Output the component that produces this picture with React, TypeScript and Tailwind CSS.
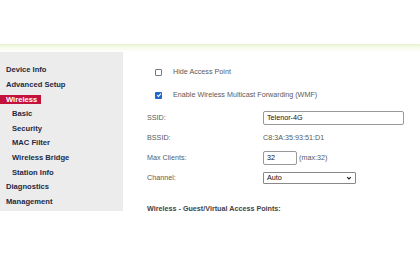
export default function App() {
  const sub = ['Basic', 'Security', 'MAC Filter', 'Wireless Bridge', 'Station Info'];

  return (
    <div className="w-[420px] h-[280px] bg-white overflow-hidden font-['Liberation_Sans',Arial,sans-serif]">
      <div className="h-[44px]" />
      <div className="h-[8px] bg-gradient-to-b from-[#e9f1d2] via-[#f7fbee] to-white" />
      <div className="flex">
        <div className="w-[123px] h-[159px] bg-[#ececec] pt-[11px] text-[7.6px] font-bold text-[#1e2a44] leading-[14.6px]">
          <div className="pl-[6px]">Device Info</div>
          <div className="pl-[6px]">Advanced Setup</div>
          <div className="flex">
            <span className="bg-[#c3123b] text-white pl-[6px] pr-[4px] leading-[9px] my-[3px]">Wireless</span>
          </div>
          {sub.map((s) => (
            <div key={s} className="pl-[12px]">{s}</div>
          ))}
          <div className="pl-[6px]">Diagnostics</div>
          <div className="pl-[6px]">Management</div>
        </div>

        <div className="flex-1 pl-[24px] pt-[14px] text-[7.2px] text-[#5a5a5a]">
          <div className="flex items-center h-[12px] pl-[8px]">
            <span className="w-[7px] h-[7px] border border-[#777] rounded-[1px] bg-white" />
            <span className="ml-[11px]">Hide Access Point</span>
          </div>
          <div className="flex items-center h-[12px] pl-[8px] mt-[11px]">
            <span className="w-[7px] h-[7px] rounded-[1px] bg-[#1e66d0] flex items-center justify-center">
              <svg viewBox="0 0 10 10" className="w-[6px] h-[6px]">
                <path d="M2 5.2 L4.2 7.4 L8.2 2.8" stroke="white" strokeWidth="1.8" fill="none" />
              </svg>
            </span>
            <span className="ml-[11px]">Enable Wireless Multicast Forwarding (WMF)</span>
          </div>

          <div className="grid grid-cols-[116px_1fr] items-center mt-[7px]">
            <div className="h-[20px] flex items-center">SSID:</div>
            <div className="h-[20px] flex items-center">
              <div className="w-[141px] h-[14px] border border-[#999] rounded-[2px] px-[3px] flex items-center text-[#111]">Telenor-4G</div>
            </div>
            <div className="h-[20px] flex items-center">BSSID:</div>
            <div className="h-[20px] flex items-center">C8:3A:35:93:51:D1</div>
            <div className="h-[20px] flex items-center">Max Clients:</div>
            <div className="h-[20px] flex items-center">
              <div className="w-[34px] h-[14px] border border-[#999] rounded-[2px] px-[3px] flex items-center text-[#111]">32</div>
              <span className="ml-[2px]">(max:32)</span>
            </div>
            <div className="h-[20px] flex items-center">Channel:</div>
            <div className="h-[20px] flex items-center">
              <div className="w-[93px] h-[12px] border border-[#888] rounded-[1px] px-[3px] flex items-center justify-between text-[#111]">
                <span>Auto</span>
                <svg viewBox="0 0 10 10" className="w-[6px] h-[6px]">
                  <path d="M2 3.5 L5 6.5 L8 3.5" stroke="#222" strokeWidth="2" fill="none" />
                </svg>
              </div>
            </div>
          </div>

          <div className="mt-[16px] font-bold text-[#444]">Wireless - Guest/Virtual Access Points:</div>
        </div>
      </div>
    </div>
  );
}
